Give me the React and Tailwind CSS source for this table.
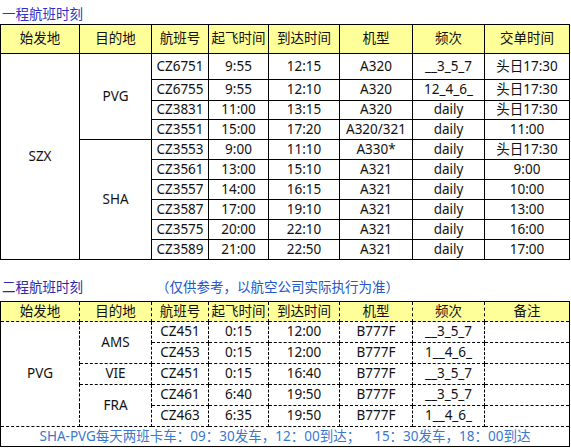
import React from "react";

const font = { fontFamily: '"Noto Sans", "Noto Sans CJK SC", sans-serif' };

const t1 = [
  ["CZ6751", "9:55", "12:15", "A320", "__3_5_7", "头日17:30"],
  ["CZ6755", "9:55", "12:10", "A320", "12_4_6_", "头日17:30"],
  ["CZ3831", "11:00", "13:15", "A320", "daily", "头日17:30"],
  ["CZ3551", "15:00", "17:20", "A320/321", "daily", "11:00"],
  ["CZ3553", "9:00", "11:10", "A330*", "daily", "头日17:30"],
  ["CZ3561", "13:00", "15:10", "A321", "daily", "9:00"],
  ["CZ3557", "14:00", "16:15", "A321", "daily", "10:00"],
  ["CZ3587", "17:00", "19:10", "A321", "daily", "13:00"],
  ["CZ3575", "20:00", "22:10", "A321", "daily", "16:00"],
  ["CZ3589", "21:00", "22:50", "A321", "daily", "17:00"],
];
const t1h = ["h-[26px]", "h-[21px]", "h-[19px]", "h-[20px]", "h-[20px]", "h-[20px]", "h-[20px]", "h-[20px]", "h-[20px]", "h-[20px]"];

const t2 = [
  ["CZ451", "0:15", "12:00", "B777F", "__3_5_7"],
  ["CZ453", "0:15", "12:00", "B777F", "1__4_6_"],
  ["CZ451", "0:15", "16:40", "B777F", "__3_5_7"],
  ["CZ461", "6:40", "19:50", "B777F", "__3_5_7"],
  ["CZ463", "6:35", "19:50", "B777F", "1__4_6_"],
];

const c1 = "border border-black text-center p-0 leading-none";
const c2 = "border border-dashed border-black text-center p-0 leading-none";

function Cols() {
  return (
    <colgroup>
      <col className="w-[79px]" />
      <col className="w-[72px]" />
      <col className="w-[57px]" />
      <col className="w-[60px]" />
      <col className="w-[71px]" />
      <col className="w-[73px]" />
      <col className="w-[72px]" />
      <col className="w-[85px]" />
    </colgroup>
  );
}

export default function App() {
  return (
    <div className="w-[571px] h-[448px] bg-white text-[13.5px] text-[#111]" style={font}>
      <div className="h-[24px] flex items-center pl-[2px] pt-[4px] text-[#3030c4]">一程航班时刻</div>
      <table className="table-fixed border-collapse w-[569px] border border-black">
        <Cols />
        <tbody>
          <tr className="h-[29px] bg-[#ffff99]">
            {["始发地", "目的地", "航班号", "起飞时间", "到达时间", "机型", "频次", "交单时间"].map((h) => (
              <td key={h} className={c1}>{h}</td>
            ))}
          </tr>
          {t1.map((r, i) => (
            <tr key={i} className={t1h[i]}>
              {i === 0 && <td rowSpan={10} className={c1}>SZX</td>}
              {i === 0 && <td rowSpan={4} className={c1}>PVG</td>}
              {i === 4 && <td rowSpan={6} className={c1}>SHA</td>}
              {r.map((v, j) => (
                <td key={j} className={c1}>{v}</td>
              ))}
            </tr>
          ))}
        </tbody>
      </table>
      <div className="h-[41px] flex items-end pb-[4px] pl-[2px] text-[#2828a8]">
        <span>二程航班时刻</span>
        <span className="ml-[73px] text-[#2157c8]">（仅供参考，以航空公司实际执行为准）</span>
      </div>
      <table className="table-fixed border-collapse w-[569px] border border-black">
        <Cols />
        <tbody>
          <tr className="h-[20px] bg-[#ffff99]">
            {["始发地", "目的地", "航班号", "起飞时间", "到达时间", "机型", "频次", "备注"].map((h) => (
              <td key={h} className={c2}>{h}</td>
            ))}
          </tr>
          {t2.map((r, i) => (
            <tr key={i} className="h-[21px]">
              {i === 0 && <td rowSpan={5} className={c2}>PVG</td>}
              {i === 0 && <td rowSpan={2} className={c2}>AMS</td>}
              {i === 2 && <td className={c2}>VIE</td>}
              {i === 3 && <td rowSpan={2} className={c2}>FRA</td>}
              {r.map((v, j) => (
                <td key={j} className={c2}>{v}</td>
              ))}
              <td className={c2}></td>
            </tr>
          ))}
          <tr className="h-[20px]">
            <td colSpan={8} className={c2 + " text-[#3a78cc]"}>
              SHA-PVG每天两班卡车：09：30发车，12：00到达；&nbsp;&nbsp;&nbsp;&nbsp;15：30发车，18：00到达
            </td>
          </tr>
        </tbody>
      </table>
    </div>
  );
}
